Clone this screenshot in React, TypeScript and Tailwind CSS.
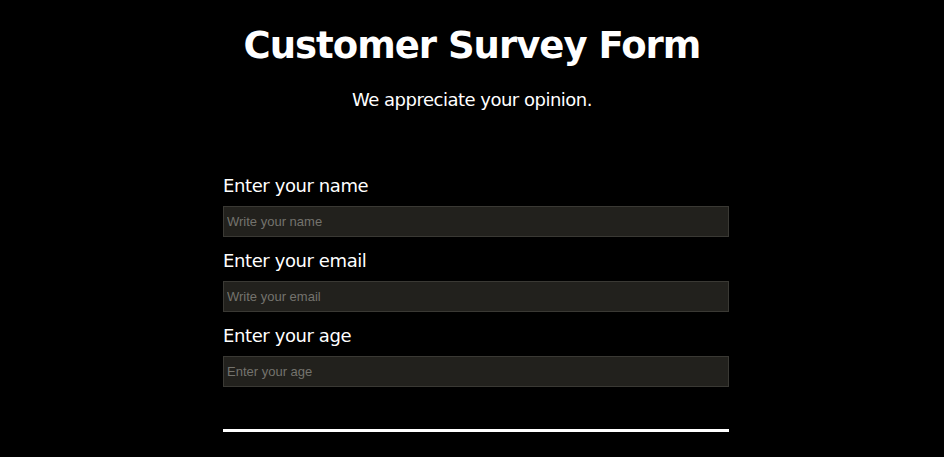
import React from 'react';

const fields = [
  { label: 'Enter your name', placeholder: 'Write your name', type: 'text' },
  { label: 'Enter your email', placeholder: 'Write your email', type: 'email' },
  { label: 'Enter your age', placeholder: 'Enter your age', type: 'number' },
];

export default function App() {
  return (
    <div className="min-h-[457px] w-full bg-black text-white font-['DejaVu_Sans',sans-serif] overflow-hidden">
      {/* Header */}
      <div className="flex flex-col items-center pt-[24px]">
        <h1 className="text-[37px] font-bold leading-[44px] tracking-[-1px]">Customer Survey Form</h1>
        <p className="mt-[20px] text-[18px] leading-[24px] tracking-[-0.5px]">We appreciate your opinion.</p>
      </div>

      {/* Form */}
      <form className="mx-auto mt-[62px] w-[514px] pl-2">
        {fields.map((f) => (
          <div key={f.label} className="mb-[12px]">
            <label className="block text-[18px] leading-[24px] tracking-[-0.4px] mb-[8px]">{f.label}</label>
            <input
              type={f.type}
              placeholder={f.placeholder}
              className="block w-full h-[31px] px-[3px] bg-[#22211d] border border-[#3a3934] text-[13px] text-white placeholder:text-[#74736d] font-['Liberation_Sans',sans-serif] outline-none"
            />
          </div>
        ))}
        <div className="mt-[42px] h-[3px] w-full bg-white" />
      </form>
    </div>
  );
}
